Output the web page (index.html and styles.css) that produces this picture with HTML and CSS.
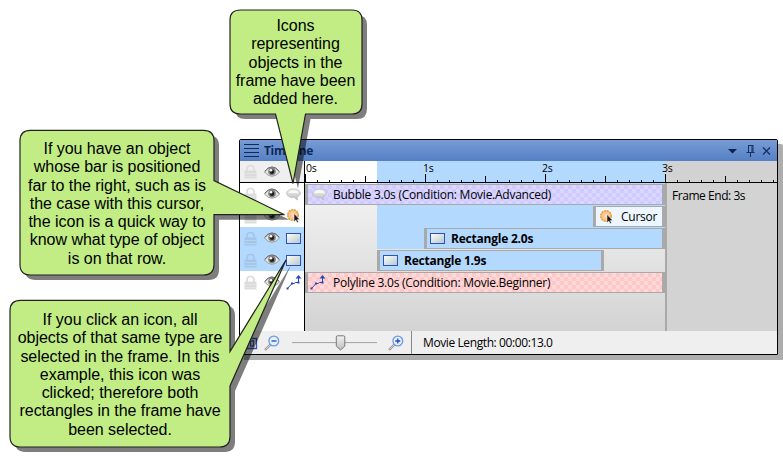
FILE: index.html
```
<!DOCTYPE html>
<html lang="en">
<head>
<meta charset="utf-8">
<title>Timeline</title>
<link rel="stylesheet" href="styles.css">
</head>
<body>
<svg class="defs" width="0" height="0">
  <defs>
    <linearGradient id="steel" x1="0" y1="0" x2="1" y2="1"><stop offset="0" stop-color="#fff"/><stop offset="1" stop-color="#b4c6c6"/></linearGradient>
    <linearGradient id="silver" x1="0" y1="0" x2="0" y2="1"><stop offset="0" stop-color="#f2f2f2"/><stop offset="1" stop-color="#bdbdbd"/></linearGradient>
    <radialGradient id="peach"><stop offset="0" stop-color="#ffd9b5"/><stop offset="1" stop-color="#ffb878"/></radialGradient>
    <symbol id="lock" viewBox="0 0 13 15">
      <path d="M3 7V4.500C3 .5 10 .5 10 4.500V7" fill="none" stroke="currentColor" stroke-width="1.700"/>
      <path d="M.5 6.500h12v8H.5z" fill="currentColor"/>
      <path d="M1 9.500h11M1 12.500h11" stroke="#fff" stroke-opacity=".35" stroke-width=".7"/>
    </symbol>
    <symbol id="eye" viewBox="0 0 16 12">
      <path d="M.5 6Q4 1.300 8 1.300T15.500 6Q12 10.300 8 10.300T.5 6z" fill="#e6e6e6" stroke="#8a8a8a" stroke-width=".8"/>
      <path d="M.7 5.400Q4 .9 8 .9T15.300 5.400" fill="none" stroke="#666" stroke-width="1"/>
      <circle cx="8" cy="5.600" r="3.800" fill="#808080"/>
      <circle cx="8" cy="5.800" r="2.200" fill="#1c1c1c"/>
      <circle cx="7" cy="4.300" r="1.300" fill="#fff"/>
    </symbol>
    <symbol id="bubble" viewBox="0 0 15 13">
      <path d="M7.500 1C3.500 1 .7 2.800 .7 5.200S3.500 9.500 7.500 9.500l1 0 3 2.500-.6-3.100c2-.7 3.400-2 3.400-3.700C14.300 2.800 11.500 1 7.500 1z" fill="url(#silver)" stroke="#b8b8b8" stroke-width=".8"/>
      <path d="M2.500 5.300Q3 2.300 7.500 2.300T12.500 5.300Q7.500 4.500 2.500 5.300z" fill="#f8f8f8"/>
    </symbol>
    <symbol id="pointer" viewBox="0 0 14 14">
      <circle cx="6" cy="6" r="5.300" fill="url(#peach)" stroke="#d9a032" stroke-width="1.300" stroke-dasharray="2 .8"/>
      <path d="M7 4.500v8.300l1.900-1.700 1.200 2.600 1.300-.6-1.100-2.500h2.500z" fill="#1b1b1b" stroke="#fff" stroke-width=".5"/>
    </symbol>
    <symbol id="rect" viewBox="0 0 15 11">
      <rect x=".5" y=".5" width="14" height="10" fill="url(#steel)" stroke="#2f4fc4"/>
    </symbol>
    <symbol id="polyline" viewBox="0 0 16 15">
      <path d="M1.500 13.500L6 8.500H8L9.500 7.500H12.500V2" fill="none" stroke="#2847ba" stroke-width="1"/>
      <path d="M.5 12.500h2v2h-2zM5 7.500h2v2H5zM11.500 6.500h2v2h-2z" fill="#2847ba"/>
      <path d="M9.500 3.500l3-3.500 3 3.500z" fill="#2847ba"/>
    </symbol>
    <symbol id="lens" viewBox="0 0 16 16">
      <path d="M1 15l5.500-5.500" stroke="#9a9a9a" stroke-width="2.400"/>
      <path d="M1.500 14.500l4.500-4.500" stroke="#ddd" stroke-width=".8"/>
      <circle cx="9.800" cy="6" r="4.900" fill="#e3f1ff" stroke="#6f9ae0" stroke-width="1.300"/>
    </symbol>
  </defs>
</svg>

<section class="window">
  <header class="titlebar">
    <svg class="grip" width="15" height="13"><path d="M0 .5h15M0 4.500h15M0 8.500h15M0 12.500h15" stroke="#102a5c"/></svg>
    <h1>Timeline</h1>
    <svg class="controls" width="44" height="14" fill="none" stroke="#17305f">
      <path d="M1 5h9L5.500 9.500z" fill="#0c2350" stroke="none"/>
      <path d="M21.500 1v7M21 1.500h5M25 1v7M26 1v7M19.500 8.500h8M23.500 9v4"/>
      <path d="M36 3.500l7 7M43 3.500l-7 7" stroke-width="1.300"/>
    </svg>
  </header>

  <div class="main">
    <aside class="objects">
      <div class="row head"><svg class="lock"><use href="#lock"/></svg><svg class="eye"><use href="#eye"/></svg></div>
      <div class="row"><svg class="lock"><use href="#lock"/></svg><svg class="eye"><use href="#eye"/></svg><svg class="i-bubble"><use href="#bubble"/></svg></div>
      <div class="row"><svg class="lock"><use href="#lock"/></svg><svg class="eye"><use href="#eye"/></svg><svg class="i-pointer"><use href="#pointer"/></svg></div>
      <div class="row selected"><svg class="lock"><use href="#lock"/></svg><svg class="eye"><use href="#eye"/></svg><svg class="i-rect"><use href="#rect"/></svg></div>
      <div class="row selected"><svg class="lock"><use href="#lock"/></svg><svg class="eye"><use href="#eye"/></svg><svg class="i-rect"><use href="#rect"/></svg></div>
      <div class="row"><svg class="lock"><use href="#lock"/></svg><svg class="eye"><use href="#eye"/></svg><svg class="i-poly"><use href="#polyline"/></svg></div>
    </aside>

    <div class="stage">
      <div class="ruler">
        <div class="labels"><span>0s</span><span>1s</span><span>2s</span><span>3s</span></div>
        <div class="ticks"></div>
      </div>
      <div class="body">
        <div class="tracks">
          <div class="track lit"><div class="bar purple"><svg class="i-bubble"><use href="#bubble"/></svg><span class="t-bubble">Bubble 3.0s (Condition: Movie.Advanced)</span></div></div>
          <div class="track lit"><div class="bar cursor"><svg class="i-pointer"><use href="#pointer"/></svg><span class="t-cursor">Cursor</span></div></div>
          <div class="track lit"><div class="bar blue two"><svg class="i-rect"><use href="#rect"/></svg><b>Rectangle 2.0s</b></div></div>
          <div class="track"><div class="bar blue one"><svg class="i-rect"><use href="#rect"/></svg><b>Rectangle 1.9s</b></div></div>
          <div class="track"><div class="bar pink"><svg class="i-poly"><use href="#polyline"/></svg><span class="t-poly">Polyline 3.0s (Condition: Movie.Beginner)</span></div></div>
        </div>
        <div class="after"><span>Frame End: 3s</span></div>
      </div>
    </div>
  </div>

  <footer class="status">
    <svg class="fit" width="14" height="14"><path d="M.5 2.500h12v10H.5zM3.500 5v5M6.500 5h3v5h-3z" fill="none" stroke="#3556ba" stroke-width="1.300"/></svg>
    <svg class="zoom-out" width="16" height="16"><use href="#lens"/><path d="M7.500 6h5" stroke="#2847ba" stroke-width="1.300"/></svg>
    <svg class="slider" width="85" height="16">
      <path d="M0 7.500h85" stroke="#aaa"/><path d="M0 8.500h85" stroke="#e6e6e6"/>
      <path d="M45.500 .8h6q1.300 0 1.300 1.300v9L48.500 15 44.300 11.100v-9q0-1.300 1.200-1.300z" fill="url(#silver)" stroke="#777"/>
    </svg>
    <svg class="zoom-in" width="16" height="16"><use href="#lens"/><path d="M7.300 6h5M9.800 3.500v5" stroke="#2847ba" stroke-width="1.300"/></svg>
    <span class="length">Movie Length: 00:00:13.0</span>
  </footer>
</section>

<svg class="shapes" width="783" height="462">
  <defs>
    <path id="c1" d="M240.500 10h111.500q10 0 10 10v84q0 10-10 10H305.500L293 183.500 275.500 114h-35q-10.500 0-10.500-10V20q0-10 10.500-10z"/>
    <path id="c2" d="M30.500 130.300h173q10.500 0 10.500 10.500v39.700l70.500 34.200H214v49.800q0 10.500-10.500 10.500h-173Q20 275 20 264.500v-123.700q0-10.500 10.500-10.500z"/>
    <path id="c3" d="M20.500 300.300h199q10.500 0 10.500 10.500v40.700L286 260 230 386v50.500q0 10.500-10.500 10.500h-199Q10 447 10 436.500v-125.700q0-10.500 10.500-10.500z"/>
  </defs>
  <g class="shade"><use href="#c1"/><use href="#c2"/><use href="#c3"/></g>
  <g class="fill"><use href="#c1"/><use href="#c2"/><use href="#c3"/></g>
</svg>
<p class="callout top">Icons<br>representing<br>objects in the<br>frame have been<br>added here.</p>
<p class="callout middle">If you have an object<br>whose bar is positioned<br>far to the right, such as is<br>the case with this cursor,<br>the icon is a quick way to<br>know what type of object<br>is on that row.</p>
<p class="callout bottom">If you click an icon, all<br>objects of that same type are<br>selected in the frame. In this<br>example, this icon was<br>clicked; therefore both<br>rectangles in the frame have<br>been selected.</p>
</body>
</html>
```
FILE: styles.css
```
* { box-sizing: border-box; }
body {
  position: relative;
  width: 783px;
  height: 462px;
  margin: 0;
  padding: 139px 0 0 239px;
  overflow: hidden;
  background: #fff;
  color: #000;
  font: 12px/16px "Open Sans", "Noto Sans", sans-serif;
  letter-spacing: -0.25px;
}
svg { display: block; flex: none; }
.defs { position: absolute; }

.window {
  display: flex;
  flex-direction: column;
  width: 539px;
  height: 216px;
  border: 1px solid #000;
  border-radius: 2px 2px 0 0;
  box-shadow: 5px 5px 0 #adadad;
}
.titlebar {
  display: flex;
  align-items: center;
  height: 21px;
  padding: 0 6px 0 4px;
  background: linear-gradient(#789cd5, #5580c5);
}
.titlebar h1 {
  flex: 1;
  margin: 0 0 0 5px;
  color: #0e2855;
  font-size: 12px;
  font-weight: 700;
  letter-spacing: -0.35px;
}

.main { display: flex; height: 170px; }
.objects { width: 65px; border-right: 1px solid #000; background: #fff; }
.row { display: flex; align-items: center; height: 22px; padding-left: 4px; }
.row.head { border-bottom: 1px solid #000; background: #efefef; }
.row.selected { background: #b4d9ff; }
.row .lock { width: 13px; height: 15px; color: #dcdcdc; }
.row.selected .lock { color: #a3c6e8; }
.row .eye { width: 16px; height: 12px; margin: 0 6px 0 7px; }
.i-bubble { width: 15px; height: 13px; }
.i-pointer { width: 14px; height: 14px; }
.row .i-pointer { margin-left: 1px; }
.i-rect { width: 15px; height: 11px; }
.i-poly { width: 16px; height: 15px; }

.stage { flex: 1; }
.ruler {
  display: flex;
  flex-direction: column;
  justify-content: space-between;
  height: 22px;
  border-bottom: 1px solid #000;
  background: linear-gradient(90deg, #fff 72px, #b4d9ff 72px 360px, #d2d2d2 360px);
}
.labels { display: grid; grid-template-columns: 117px 119px 120px auto; height: 13px; padding: 0 0 0 1px; font-size: 10.5px; line-height: 14px; }
.ticks {
  height: 8px;
  background:
    repeating-linear-gradient(90deg, #000 0 1px, transparent 1px 120px) 0 0 / 100% 8px no-repeat,
    repeating-linear-gradient(90deg, #000 0 1px, transparent 1px 60px) 0 2px / 100% 6px no-repeat,
    repeating-linear-gradient(90deg, #000 0 1px, transparent 1px 12px) 0 6px / 100% 2px no-repeat;
}
.body { display: flex; height: 148px; }
.tracks { width: 360px; background: linear-gradient(#f4f4f4, #d3d3d3); }
.track { height: 22px; padding-top: 1px; }
.track.lit { background: linear-gradient(90deg, transparent 72px, #b4d9ff 72px); }
.bar {
  display: flex;
  align-items: center;
  height: 21px;
  padding-left: 4px;
  border: solid #a9a9a9;
  border-width: 1px 3px;
  white-space: nowrap;
}
.purple { background: repeating-conic-gradient(#cfcbff 0 25%, #dad6ff 0 50%) 0 0 / 8px 8px; }
.pink { padding-left: 2px; background: repeating-conic-gradient(#ffc8c8 0 25%, #ffd8d8 0 50%) 0 0 / 8px 8px; }
.blue { background: #b4d9ff; }
.cursor { margin-left: 288px; background: #edf6ff; }
.two { margin-left: 119px; padding-left: 3px; }
.one { margin-left: 72px; width: 227px; padding-left: 3px; }
.bar span { margin-left: 6px; }
.bar .t-poly { margin-left: 7px; }
.bar b { margin-left: 6px; letter-spacing: -0.22px; }
.bar .t-cursor { margin-left: 7px; }
.after { flex: 1; padding: 5px 0 0 5px; border-left: 2px solid #a9a9a9; background: #d3d3d3; letter-spacing: -0.45px; }

.status { display: flex; align-items: center; height: 23px; padding-left: 4px; background: #efefef; }
.zoom-out { margin-left: 6px; }
.slider { margin-left: 12px; }
.zoom-in { margin-left: 11px; }
.length { display: flex; align-items: center; height: 23px; margin-left: 7px; padding-left: 11px; border-left: 1px solid #888; letter-spacing: -0.4px; }

.shapes { position: absolute; left: 0; top: 0; }
.shade { fill: #000; opacity: .5; transform: translate(5px, 5px); }
.fill { fill: #c1ed84; stroke: #222; stroke-width: 1.2; }
.callout {
  position: absolute;
  margin: 0;
  font: 16px/18.3px "Liberation Sans", Arial, sans-serif;
  letter-spacing: -0.03px;
  text-align: center;
  white-space: nowrap;
}
.top { left: 230px; top: 17px; width: 131px; }
.middle { left: 20px; top: 140px; width: 194px; }
.bottom { left: 10px; top: 311px; width: 220px; }
```
